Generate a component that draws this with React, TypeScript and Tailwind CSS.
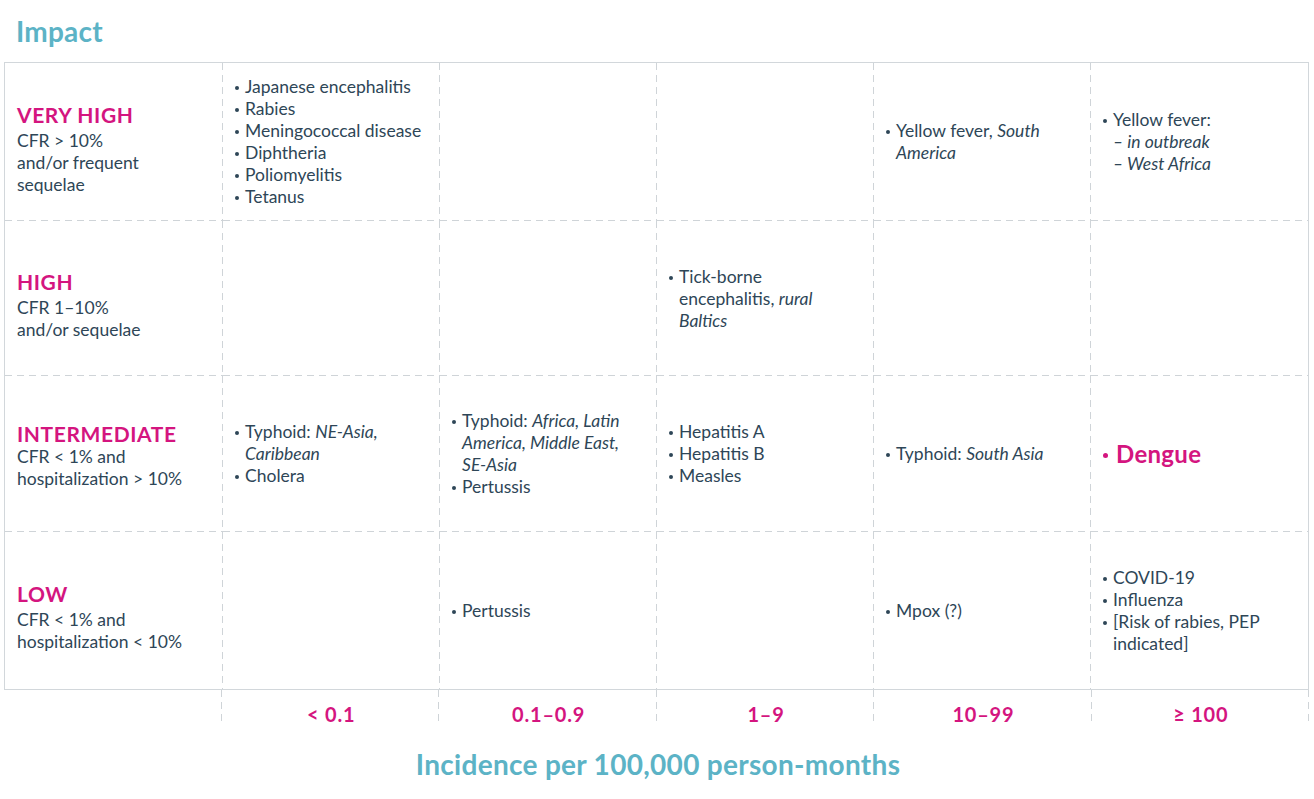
import React from "react";

const TEXT = "text-[#2e4657]";
const MAG = "text-[#d4157f]";

const BG_RB =
  "[background:linear-gradient(#cfd4d8_60%,transparent_0)_right_top/1px_12px_repeat-y,linear-gradient(90deg,#cfd4d8_60%,transparent_0)_left_bottom/12px_1px_repeat-x]";
const BG_R = "[background:linear-gradient(#cfd4d8_60%,transparent_0)_right_top/1px_12px_repeat-y]";
const BG_B = "[background:linear-gradient(90deg,#cfd4d8_60%,transparent_0)_left_bottom/12px_1px_repeat-x]";

function B({ children }: { children: React.ReactNode }) {
  return (
    <div className="flex">
      <span className="w-[10px] shrink-0 pt-[10px]">
        <span className="block w-[4px] h-[4px] rounded-full bg-current" />
      </span>
      <span className="whitespace-nowrap">{children}</span>
    </div>
  );
}

function Cell({ children, last, lastRow }: { children?: React.ReactNode; last?: boolean; lastRow?: boolean }) {
  const bg = last ? (lastRow ? "" : BG_B) : lastRow ? BG_R : BG_RB;
  return (
    <div className={"flex items-center pl-[12px] " + bg}>
      <div className="w-full">{children}</div>
    </div>
  );
}

function Label({
  title,
  lines,
  lastRow,
  tight,
}: {
  title: string;
  lines: string[];
  lastRow?: boolean;
  tight?: boolean;
}) {
  return (
    <div
      className={
        "flex items-center pl-[12px] " + (tight ? "pt-[4px] " : "pt-[11px] ") + (lastRow ? BG_R : BG_RB)
      }
    >
      <div>
        <div
          className={
            "text-[21px] font-bold tracking-[0.6px] " + (tight ? "leading-[24px] " : "leading-[30px] ") + MAG
          }
        >
          {title}
        </div>
        {lines.map((l) => (
          <div key={l}>{l}</div>
        ))}
      </div>
    </div>
  );
}

export default function App() {
  return (
    <div
      className={"w-[1314px] h-[799px] bg-white " + TEXT}
      style={{ fontFamily: "Lato, 'Open Sans', sans-serif" }}
    >
      <div className="pl-[16px] pt-[14px] h-[62px] text-[28px] leading-[34px] font-bold text-[#5cb3c6] tracking-[0.2px]">
        Impact
      </div>
      <div className="ml-[4px] w-[1305px]">
        <div className="grid grid-cols-[218px_repeat(5,1fr)] grid-rows-[158px_155px_156px_157px] border border-[#d2d7db] text-[17.5px] leading-[22px]">
          {/* VERY HIGH */}
          <Label title="VERY HIGH" lines={["CFR > 10%", "and/or frequent", "sequelae"]} />
          <Cell>
            <B>Japanese encephalitis</B>
            <B>Rabies</B>
            <B>Meningococcal disease</B>
            <B>Diphtheria</B>
            <B>Poliomyelitis</B>
            <B>Tetanus</B>
          </Cell>
          <Cell />
          <Cell />
          <Cell>
            <B>
              Yellow fever, <i>South</i>
              <br />
              <i>America</i>
            </B>
          </Cell>
          <Cell last>
            <B>
              Yellow fever:
              <br />
              <i>– in outbreak</i>
              <br />
              <i>– West Africa</i>
            </B>
          </Cell>

          {/* HIGH */}
          <Label title="HIGH" lines={["CFR 1–10%", "and/or sequelae"]} />
          <Cell />
          <Cell />
          <Cell>
            <B>
              Tick-borne
              <br />
              encephalitis, <i>rural</i>
              <br />
              <i>Baltics</i>
            </B>
          </Cell>
          <Cell />
          <Cell last />

          {/* INTERMEDIATE */}
          <Label title="INTERMEDIATE" lines={["CFR < 1% and", "hospitalization > 10%"]} tight />
          <Cell>
            <B>
              Typhoid: <i>NE-Asia,</i>
              <br />
              <i>Caribbean</i>
            </B>
            <B>Cholera</B>
          </Cell>
          <Cell>
            <B>
              Typhoid: <i>Africa, Latin</i>
              <br />
              <i>America, Middle East,</i>
              <br />
              <i>SE-Asia</i>
            </B>
            <B>Pertussis</B>
          </Cell>
          <Cell>
            <B>Hepatitis A</B>
            <B>Hepatitis B</B>
            <B>Measles</B>
          </Cell>
          <Cell>
            <B>
              Typhoid: <i>South Asia</i>
            </B>
          </Cell>
          <Cell last>
            <div className={"flex text-[24px] leading-[26px] font-bold tracking-[0.3px] " + MAG}>
              <span className="w-[13px] shrink-0 pt-[12px]">
                <span className="block w-[5px] h-[5px] rounded-full bg-current" />
              </span>
              <span>Dengue</span>
            </div>
          </Cell>

          {/* LOW */}
          <Label title="LOW" lines={["CFR < 1% and", "hospitalization < 10%"]} lastRow />
          <Cell lastRow />
          <Cell lastRow>
            <B>Pertussis</B>
          </Cell>
          <Cell lastRow />
          <Cell lastRow>
            <B>Mpox (?)</B>
          </Cell>
          <Cell lastRow last>
            <B>COVID-19</B>
            <B>Influenza</B>
            <B>
              [Risk of rabies, PEP
              <br />
              indicated]
            </B>
          </Cell>
        </div>
        <div className={"grid grid-cols-[218px_repeat(5,1fr)] h-[34px] text-[20px] leading-[24px] font-bold tracking-[0.8px] " + MAG}>
          <div className={BG_R} />
          {["< 0.1", "0.1–0.9", "1–9", "10–99", "≥ 100"].map((t) => (
            <div key={t} className={"flex items-start justify-center pt-[12px] pl-[1px] " + BG_R}>
              {t}
            </div>
          ))}
        </div>
      </div>
      <div className="mt-[23px] text-center text-[28px] leading-[34px] font-bold text-[#5cb3c6] tracking-[0.3px] pl-[2px]">
        Incidence per 100,000 person-months
      </div>
    </div>
  );
}
